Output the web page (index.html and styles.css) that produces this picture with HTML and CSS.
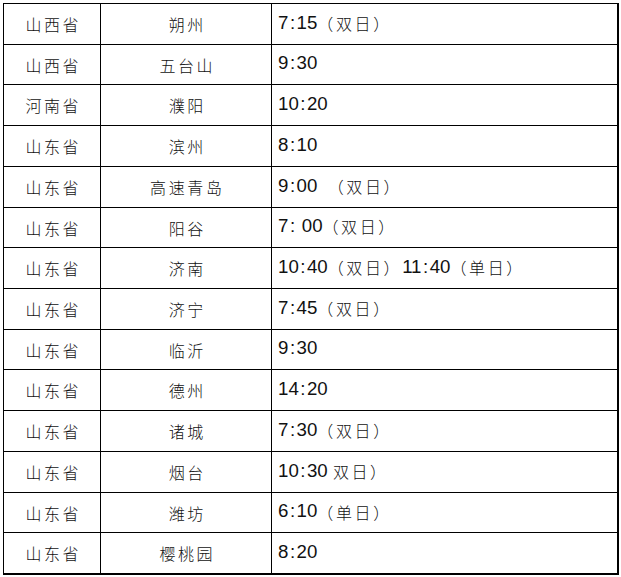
FILE: index.html
```html
<!DOCTYPE html>
<html lang="zh">
<head>
<meta charset="utf-8">
<title>班次时间表</title>
<link rel="stylesheet" href="styles.css">
</head>
<body>
<div class="table">
  <div class="cell r41 c1">山西省</div><div class="cell r41 c2">朔州</div><div class="cell r41 c3">7<span class="colon">:</span>15<span class="cn">（双日）</span></div>
  <div class="cell r40 c1">山西省</div><div class="cell r40 c2">五台山</div><div class="cell r40 c3">9<span class="colon">:</span>30</div>
  <div class="cell r41 c1">河南省</div><div class="cell r41 c2">濮阳</div><div class="cell r41 c3">10<span class="colon">:</span>20</div>
  <div class="cell r41 c1">山东省</div><div class="cell r41 c2">滨州</div><div class="cell r41 c3">8<span class="colon">:</span>10</div>
  <div class="cell r41 c1">山东省</div><div class="cell r41 c2">高速青岛</div><div class="cell r41 c3">9<span class="colon">:</span>00&nbsp;&nbsp;<span class="cn">（双日）</span></div>
  <div class="cell r40 c1">山东省</div><div class="cell r40 c2">阳谷</div><div class="cell r40 c3">7<span class="colon">:</span>&nbsp;00<span class="cn">（双日）</span></div>
  <div class="cell r41 c1">山东省</div><div class="cell r41 c2">济南</div><div class="cell r41 c3">10<span class="colon">:</span>40<span class="cn">（双日）</span>11<span class="colon">:</span>40<span class="cn">（单日）</span></div>
  <div class="cell r41 c1">山东省</div><div class="cell r41 c2">济宁</div><div class="cell r41 c3">7<span class="colon">:</span>45<span class="cn">（双日）</span></div>
  <div class="cell r40 c1">山东省</div><div class="cell r40 c2">临沂</div><div class="cell r40 c3">9<span class="colon">:</span>30</div>
  <div class="cell r41 c1">山东省</div><div class="cell r41 c2">德州</div><div class="cell r41 c3">14<span class="colon">:</span>20</div>
  <div class="cell r41 c1">山东省</div><div class="cell r41 c2">诸城</div><div class="cell r41 c3">7<span class="colon">:</span>30<span class="cn">（双日）</span></div>
  <div class="cell r41 c1">山东省</div><div class="cell r41 c2">烟台</div><div class="cell r41 c3">10<span class="colon">:</span>30&nbsp;<span class="cn">双日）</span></div>
  <div class="cell r40 c1">山东省</div><div class="cell r40 c2">潍坊</div><div class="cell r40 c3 top">6<span class="colon">:</span>10<span class="cn">（单日）</span></div>
  <div class="cell r41 c1 last">山东省</div><div class="cell r41 c2 last">樱桃园</div><div class="cell r41 c3 last">8<span class="colon">:</span>20</div>
</div>
</body>
</html>
```
FILE: styles.css
```css
html, body {
  margin: 0;
  padding: 0;
  background: #ffffff;
}
body {
  padding: 3px 0 0 3px;
  color: #111;
}
.table {
  display: grid;
  grid-template-columns: 97px 171px 347px;
  width: max-content;
  border-top: 1px solid #000;
  border-left: 1px solid #000;
}
.cell {
  box-sizing: border-box;
  border-right: 1px solid #000;
  border-bottom: 1px solid #000;
  display: flex;
  align-items: center;
  white-space: nowrap;
}
.r41 { height: 41px; }
.r40 { height: 40px; }
.c1, .c2 {
  justify-content: center;
  font-family: "Noto Sans CJK SC", sans-serif;
  font-size: 16px;
  letter-spacing: 2.6px;
  padding-left: 2.6px;
  font-weight: 300;
}
.c3 {
  padding-left: 6px;
  padding-bottom: 3px;
  font-family: "Liberation Sans", "Noto Sans CJK SC", sans-serif;
  font-size: 18.67px;
  border-right-width: 2px;
}
.c3.top {
  align-items: flex-start;
  padding-top: 7px;
}
.colon {
  padding: 0 1.5px;
}
.cn {
  font-family: "Noto Sans CJK SC", sans-serif;
  font-size: 16px;
  font-weight: 300;
  letter-spacing: 2.6px;
}
.last {
  border-bottom-width: 2px;
  height: 42px;
}
```
